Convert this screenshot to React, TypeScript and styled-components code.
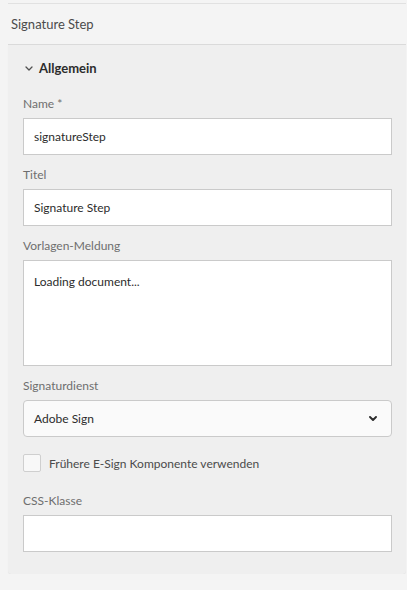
import styled, { createGlobalStyle } from 'styled-components';

const GlobalStyle = createGlobalStyle`
    body {
        margin: 0;
        background: #f4f4f4;
        font-family: Lato, 'Liberation Sans', sans-serif;
        color: #2c2c2c;
    }
`;

export default function App() {
    return (
        <>
            <GlobalStyle />
            <Page>
                <TopRule />
                <Header>Signature Step</Header>
                <Panel>
                    <SectionHeader>
                        <Chevron width="8" height="5" viewBox="0 0 8 5" small>
                            <path d="M1 1l3 3 3-3" />
                        </Chevron>
                        Allgemein
                    </SectionHeader>
                    <Fields>
                        <Field>
                            <Label>Name *</Label>
                            <TextBox>signatureStep</TextBox>
                        </Field>
                        <Field>
                            <Label>Titel</Label>
                            <TextBox>Signature Step</TextBox>
                        </Field>
                        <Field>
                            <Label>Vorlagen-Meldung</Label>
                            <TextArea>Loading document...</TextArea>
                        </Field>
                        <Field>
                            <Label>Signaturdienst</Label>
                            <Select>
                                Adobe Sign
                                <Chevron width="8" height="5" viewBox="0 0 8 5">
                                    <path d="M1 1l3 3 3-3" />
                                </Chevron>
                            </Select>
                        </Field>
                        <CheckRow>
                            <CheckBox />
                            Frühere E-Sign Komponente verwenden
                        </CheckRow>
                        <Field>
                            <Label>CSS-Klasse</Label>
                            <TextBox />
                        </Field>
                    </Fields>
                </Panel>
            </Page>
        </>
    );
}

const Page = styled.div`
    padding-left: 8px;
    width: 398px;
`;

const TopRule = styled.div`
    margin-top: 3px;
    height: 1px;
    background: #e1e1e1;
`;

const Header = styled.div`
    height: 40px;
    display: flex;
    align-items: center;
    padding-left: 3px;
    font-size: 13px;
    color: #4b4b4b;
    border-bottom: 1px solid #dadada;
`;

const Panel = styled.div`
    background: #efefef;
    padding: 0 14px 22px 15px;
    border-radius: 0 0 4px 4px;
    box-shadow: 0 1px 1px rgba(0, 0, 0, 0.06);
`;

const SectionHeader = styled.div`
    display: flex;
    align-items: center;
    gap: 6px;
    padding: 15px 0 20px 2px;
    line-height: 16px;
    font-size: 13px;
    font-weight: 700;
    color: #2c2c2c;
`;

const Chevron = styled.svg<{ small?: boolean }>`
    fill: none;
    stroke: ${(props) => (props.small ? '#505050' : '#2c2c2c')};
    stroke-width: ${(props) => (props.small ? 1.3 : 1.9)};
    stroke-linecap: round;
    stroke-linejoin: round;
    flex-shrink: 0;
`;

const Fields = styled.div`
    display: flex;
    flex-direction: column;
    gap: 12px;
`;

const Field = styled.div`
    display: flex;
    flex-direction: column;
`;

const Label = styled.div`
    font-size: 12px;
    line-height: 16px;
    margin-bottom: 6px;
    color: #6e6e6e;
`;

const TextBox = styled.div`
    box-sizing: border-box;
    height: 37px;
    display: flex;
    align-items: center;
    padding: 0 10px;
    background: #fff;
    border: 1px solid #cacaca;
    font-size: 12px;
    color: #2c2c2c;
`;

const TextArea = styled.div`
    box-sizing: border-box;
    height: 106px;
    padding: 12px 10px;
    background: #fff;
    border: 1px solid #cacaca;
    font-size: 12px;
    line-height: 18px;
    color: #2c2c2c;
`;

const Select = styled.div`
    box-sizing: border-box;
    height: 37px;
    display: flex;
    align-items: center;
    justify-content: space-between;
    padding: 0 14px 0 10px;
    background: #fafafa;
    border: 1px solid #cacaca;
    border-radius: 4px;
    font-size: 12px;
    color: #2c2c2c;
`;

const CheckRow = styled.div`
    display: flex;
    align-items: center;
    gap: 8px;
    padding: 5px 0 9px 0;
    font-size: 12px;
    color: #4b4b4b;
`;

const CheckBox = styled.div`
    box-sizing: border-box;
    width: 18px;
    height: 18px;
    background: #f8f8f8;
    border: 1px solid #cfcfcf;
    border-radius: 2px;
`;
